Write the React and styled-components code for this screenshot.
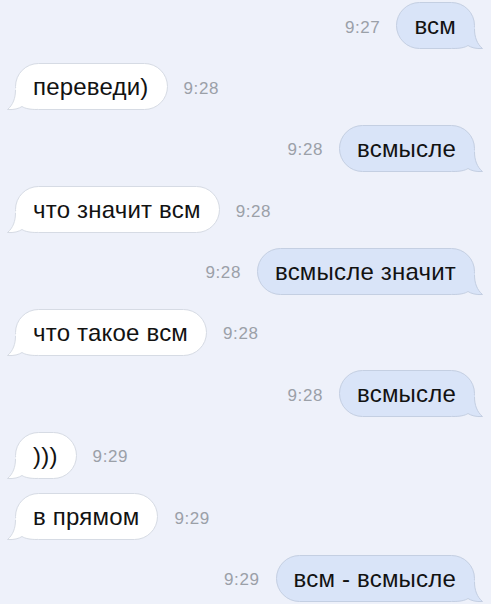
import React from "react";
import styled, { createGlobalStyle } from "styled-components";

const Global = createGlobalStyle`
  html, body {
    margin: 0;
    padding: 0;
    background: #eef1fa;
  }
  body {
    font-family: "Liberation Sans", Arial, sans-serif;
    -webkit-font-smoothing: antialiased;
  }
`;

const Thread = styled.div`
  width: 491px;
  height: 604px;
  box-sizing: border-box;
  padding: 2px 0 0;
  display: flex;
  flex-direction: column;
  gap: 14.4px;
  overflow: hidden;
  background: #eef1fa;
`;

const Row = styled.div`
  display: flex;
  align-items: center;
  gap: 16px;
  justify-content: ${(p) => (p.$out ? "flex-end" : "flex-start")};
  padding: ${(p) => (p.$out ? "0 16px 0 0" : "0 0 0 15px")};
`;

const Bubble = styled.div`
  position: relative;
  box-sizing: border-box;
  height: 47px;
  display: flex;
  align-items: center;
  padding: 1px 18px 0 17px;
  border-radius: 24px;
  border: 1px solid ${(p) => (p.$out ? "#c4cfe2" : "#d6dbe4")};
  background: ${(p) => (p.$out ? "#d9e4f8" : "#ffffff")};
  color: #121212;
  font-size: 24px;
  letter-spacing: 0.2px;
  white-space: nowrap;
`;

const Label = styled.span`
  position: relative;
  z-index: 1;
`;

const Tail = styled.svg`
  position: absolute;
  z-index: 0;
  bottom: -1px;
  width: 30px;
  height: 22px;
  overflow: visible;
  ${(p) =>
    p.$out
      ? "right: -9px; transform: scaleX(-1);"
      : "left: -9px;"}
`;

const Time = styled.span`
  margin-top: 4px;
  font-size: 17px;
  letter-spacing: 0.6px;
  color: #9ba0a8;
  font-weight: 300;
`;

function BubbleTail({ out }) {
  const fill = out ? "#d9e4f8" : "#ffffff";
  const stroke = out ? "#c4cfe2" : "#d6dbe4";
  return (
    <Tail $out={out} viewBox="0 0 30 22" aria-hidden="true">
      <path
        d="M8.5 0 C8.5 10 6 17 0.5 21.5 C7 22 12 20.5 15 18.5 C18 20.5 23 21.5 30 21.5 L30 0 Z"
        fill={fill}
      />
      <path
        d="M8.5 2 C8.5 10 6 17 0.5 21.5 C7 22 12 20.5 15 18.5 C18 20.5 23 21.5 30 21.5"
        fill="none"
        stroke={stroke}
        strokeWidth="1"
      />
    </Tail>
  );
}

const messages = [
  { out: true, text: "всм", time: "9:27" },
  { out: false, text: "переведи)", time: "9:28" },
  { out: true, text: "всмысле", time: "9:28" },
  { out: false, text: "что значит всм", time: "9:28" },
  { out: true, text: "всмысле значит", time: "9:28" },
  { out: false, text: "что такое всм", time: "9:28" },
  { out: true, text: "всмысле", time: "9:28" },
  { out: false, text: ")))", time: "9:29" },
  { out: false, text: "в прямом", time: "9:29" },
  { out: true, text: "всм - всмысле", time: "9:29" },
];

function Message({ out, text, time }) {
  const bubble = (
    <Bubble $out={out}>
      <BubbleTail out={out} />
      <Label>{text}</Label>
    </Bubble>
  );
  return (
    <Row $out={out}>
      {out ? (
        <>
          <Time>{time}</Time>
          {bubble}
        </>
      ) : (
        <>
          {bubble}
          <Time>{time}</Time>
        </>
      )}
    </Row>
  );
}

export default function App() {
  return (
    <>
      <Global />
      <Thread>
        {messages.map((m, i) => (
          <Message key={i} {...m} />
        ))}
      </Thread>
    </>
  );
}
